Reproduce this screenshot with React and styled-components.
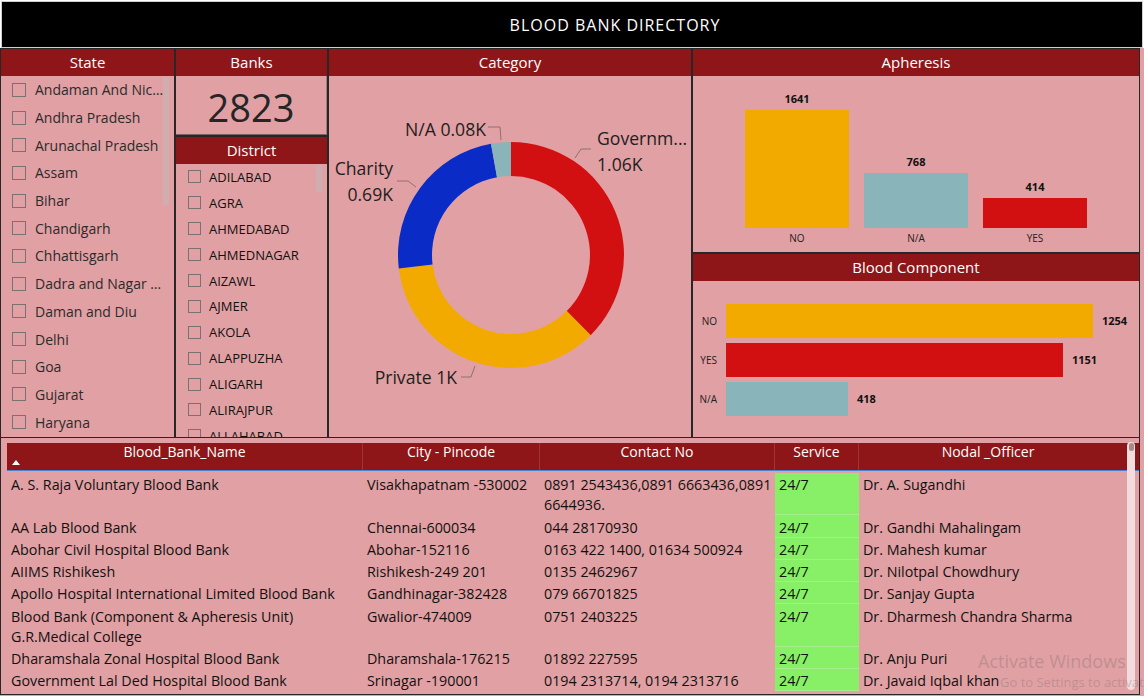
import React from 'react'
import styled, { createGlobalStyle } from 'styled-components'

const GlobalStyle = createGlobalStyle`
  html, body { margin: 0; padding: 0; background: #fff; }
  body { font-family: "Open Sans", "Noto Sans", sans-serif; }
  * { box-sizing: border-box; }
`

const states = [
  'Andaman And Nicobar Islands', 'Andhra Pradesh', 'Arunachal Pradesh', 'Assam', 'Bihar',
  'Chandigarh', 'Chhattisgarh', 'Dadra and Nagar Haveli', 'Daman and Diu', 'Delhi', 'Goa',
  'Gujarat', 'Haryana', 'Himachal Pradesh',
]

const districts = [
  'ADILABAD', 'AGRA', 'AHMEDABAD', 'AHMEDNAGAR', 'AIZAWL', 'AJMER', 'AKOLA',
  'ALAPPUZHA', 'ALIGARH', 'ALIRAJPUR', 'ALLAHABAD', 'ALWAR',
]

const category = [
  { name: 'Government', value: 1060, color: '#d31011' },
  { name: 'Private', value: 1003, color: '#f2aa00' },
  { name: 'Charity', value: 680, color: '#0a2bc6' },
  { name: 'N/A', value: 80, color: '#89b5ba' },
]

const apheresis = [
  { label: 'NO', value: 1641, color: '#f2aa00' },
  { label: 'N/A', value: 768, color: '#89b5ba' },
  { label: 'YES', value: 414, color: '#d31011' },
]

const components = [
  { label: 'NO', value: 1254, color: '#f2aa00' },
  { label: 'YES', value: 1151, color: '#d31011' },
  { label: 'N/A', value: 418, color: '#89b5ba' },
]

const columns = [
  { title: 'Blood_Bank_Name', width: 356 },
  { title: 'City - Pincode', width: 177 },
  { title: 'Contact No', width: 235 },
  { title: 'Service', width: 84 },
  { title: 'Nodal _Officer', width: 258 },
]

const rows = [
  ['A. S. Raja Voluntary Blood Bank', 'Visakhapatnam -530002', '0891 2543436,0891 6663436,0891\n6644936.', '24/7', 'Dr. A. Sugandhi'],
  ['AA Lab Blood Bank', 'Chennai-600034', '044 28170930', '24/7', 'Dr. Gandhi Mahalingam'],
  ['Abohar Civil Hospital Blood Bank', 'Abohar-152116', '0163 422 1400, 01634 500924', '24/7', 'Dr. Mahesh kumar'],
  ['AIIMS Rishikesh', 'Rishikesh-249 201', '0135 2462967', '24/7', 'Dr. Nilotpal Chowdhury'],
  ['Apollo Hospital International Limited Blood Bank', 'Gandhinagar-382428', '079 66701825', '24/7', 'Dr. Sanjay Gupta'],
  ['Blood Bank (Component & Apheresis Unit)\nG.R.Medical College', 'Gwalior-474009', '0751 2403225', '24/7', 'Dr. Dharmesh Chandra Sharma'],
  ['Dharamshala Zonal Hospital Blood Bank', 'Dharamshala-176215', '01892 227595', '24/7', 'Dr. Anju Puri'],
  ['Government Lal Ded Hospital Blood Bank', 'Srinagar -190001', '0194 2313714, 0194 2313716', '24/7', 'Dr. Javaid Iqbal khan'],
]

const gridCols = columns.map(c => c.width + 'px').join(' ')

// donut helpers, angles are degrees clockwise from 12 o'clock
const pt = (cx, cy, r, a) => {
  const rad = (a * Math.PI) / 180
  return [cx + r * Math.sin(rad), cy - r * Math.cos(rad)]
}
const arc = (cx, cy, r0, r1, a0, a1) => {
  const large = a1 - a0 > 180 ? 1 : 0
  const [x1, y1] = pt(cx, cy, r1, a0)
  const [x2, y2] = pt(cx, cy, r1, a1)
  const [x3, y3] = pt(cx, cy, r0, a1)
  const [x4, y4] = pt(cx, cy, r0, a0)
  return `M${x1} ${y1} A${r1} ${r1} 0 ${large} 1 ${x2} ${y2} L${x3} ${y3} A${r0} ${r0} 0 ${large} 0 ${x4} ${y4} Z`
}

function Donut () {
  const total = category.reduce((s, c) => s + c.value, 0)
  let start = 0
  const slices = category.map(c => {
    const sweep = (c.value / total) * 360
    const d = arc(182, 179, 79, 113, start, start + sweep)
    start += sweep
    return <path key={c.name} d={d} fill={c.color} />
  })
  return (
    <DonutSvg width='362' height='361' viewBox='0 0 362 361'>
      {slices}
      <g fill='none' stroke='#8a7273' strokeWidth='1'>
        <polyline points='246,82 252,73 262,73' />
        <polyline points='159,51 171,51 172,64' />
        <polyline points='68,105 79,105 87,111' />
        <polyline points='132,301 142,301 146,290' />
      </g>
      <LabelText x='268' y='69'>Governm...</LabelText>
      <LabelText x='268' y='95'>1.06K</LabelText>
      <LabelText x='157' y='60' textAnchor='end'>N/A 0.08K</LabelText>
      <LabelText x='64' y='99' textAnchor='end'>Charity</LabelText>
      <LabelText x='64' y='125' textAnchor='end'>0.69K</LabelText>
      <LabelText x='128' y='308' textAnchor='end'>Private 1K</LabelText>
    </DonutSvg>
  )
}

function ColumnChart () {
  const max = Math.max(...apheresis.map(a => a.value))
  return (
    <ColumnArea>
      {apheresis.map(a => (
        <ColumnItem key={a.label}>
          <ValueText>{a.value}</ValueText>
          <ColumnBar $color={a.color} style={{ height: Math.round((a.value / max) * 118) }} />
          <AxisText>{a.label}</AxisText>
        </ColumnItem>
      ))}
    </ColumnArea>
  )
}

function BarChart () {
  const max = Math.max(...components.map(c => c.value))
  return (
    <BarArea>
      {components.map(c => (
        <BarRow key={c.label}>
          <BarLabel>{c.label}</BarLabel>
          <HBar $color={c.color} style={{ width: Math.round((c.value / max) * 367) }} />
          <ValueText>{c.value}</ValueText>
        </BarRow>
      ))}
    </BarArea>
  )
}

export default function App () {
  return (
    <Page>
      <GlobalStyle />
      <TitleBar>BLOOD BANK DIRECTORY</TitleBar>
      <Board>
        <TopGrid>
          <Panel>
            <PanelHeader>State</PanelHeader>
            <SlicerList $pad={11} $gap={9}>
              {states.map(s => (
                <SlicerItem key={s} $h={27.7}>
                  <Check $size={14} />
                  <StateText>{s}</StateText>
                </SlicerItem>
              ))}
              <ScrollThumb $left={162} $height={128} />
            </SlicerList>
          </Panel>

          <Stack>
            <Panel $height={86}>
              <PanelHeader>Banks</PanelHeader>
              <CardValue>2823</CardValue>
            </Panel>
            <Panel $grow>
              <PanelHeader>District</PanelHeader>
              <SlicerList $pad={12} $gap={8}>
                {districts.map(d => (
                  <SlicerItem key={d} $h={25.9}>
                    <Check $size={13} />
                    <DistrictText>{d}</DistrictText>
                  </SlicerItem>
                ))}
                <ScrollThumb $left={140} $height={27} />
              </SlicerList>
            </Panel>
          </Stack>

          <Panel>
            <PanelHeader>Category</PanelHeader>
            <ChartBody>
              <Donut />
            </ChartBody>
          </Panel>

          <Stack>
            <Panel $height={203}>
              <PanelHeader>Apheresis</PanelHeader>
              <ColumnChart />
            </Panel>
            <Panel $grow>
              <PanelHeader>Blood Component</PanelHeader>
              <BarChart />
            </Panel>
          </Stack>
        </TopGrid>

        <TablePanel>
          <HeaderRow>
            {columns.map((c, i) => (
              <HeaderCell key={c.title}>
                {c.title}
                {i === 0 && <SortArrow />}
              </HeaderCell>
            ))}
          </HeaderRow>
          {rows.map(r => (
            <DataRow key={r[0]}>
              {r.map((v, i) => (
                <Cell key={i} $service={i === 3}>{v}</Cell>
              ))}
            </DataRow>
          ))}
          <TableScroll>
            <TableThumb />
          </TableScroll>
        </TablePanel>
      </Board>

      <Watermark>
        <WmTitle>Activate Windows</WmTitle>
        <WmSub>Go to Settings to activate Windows.</WmSub>
      </Watermark>
    </Page>
  )
}

const Page = styled.div`
  position: relative;
  width: 1144px;
  height: 697px;
  overflow: hidden;
  background: #fff;
`

const TitleBar = styled.div`
  margin: 1px 1px 0 1px;
  height: 47px;
  border: 1px solid #cfcfcf;
  padding-left: 86px;
  background: #000;
  color: #fff;
  display: flex;
  align-items: center;
  justify-content: center;
  font-size: 16px;
  letter-spacing: 1px;
`

const Board = styled.div`
  background: #e1a0a3;
  height: 648px;
`

const TopGrid = styled.div`
  width: 1140px;
  height: 390px;
  display: grid;
  grid-template-columns: 173px 151px 362px 446px;
  column-gap: 2px;
  padding: 1px 1px 1px 1px;
  background: #272727;
`

const Stack = styled.div`
  display: flex;
  flex-direction: column;
  gap: 2px;
  min-height: 0;
`

const Panel = styled.div`
  position: relative;
  display: flex;
  flex-direction: column;
  background: #e1a0a3;
  overflow: hidden;
  min-height: 0;
  ${p => p.$height && `height: ${p.$height}px; flex: none;`}
  ${p => p.$grow && 'flex: 1;'}
`

const PanelHeader = styled.div`
  flex: none;
  height: 27px;
  padding-bottom: 1px;
  background: #8f1618;
  color: #fff;
  font-size: 15px;
  display: flex;
  align-items: center;
  justify-content: center;
`

const SlicerList = styled.div`
  position: relative;
  flex: 1;
  overflow: hidden;
  padding-left: ${p => p.$pad}px;
  --gap: ${p => p.$gap}px;
`

const SlicerItem = styled.div`
  height: ${p => p.$h}px;
  display: flex;
  align-items: center;
  gap: var(--gap);
`

const Check = styled.span`
  flex: none;
  width: ${p => p.$size}px;
  height: ${p => p.$size}px;
  border: 1px solid #7b7172;
`

const StateText = styled.span`
  font-size: 14px;
  color: #2b2b2b;
  white-space: nowrap;
  overflow: hidden;
  text-overflow: ellipsis;
  max-width: 129px;
`

const DistrictText = styled.span`
  font-size: 13px;
  color: #111;
  white-space: nowrap;
`

const ScrollThumb = styled.div`
  position: absolute;
  top: 1px;
  left: ${p => p.$left}px;
  width: 6px;
  height: ${p => p.$height}px;
  background: #cfaeb0;
`

const CardValue = styled.div`
  flex: 1;
  display: flex;
  align-items: center;
  justify-content: center;
  padding-top: 3px;
  font-size: 38px;
  color: #252525;
  border-right: 1px solid #9a7f80;
  border-bottom: 1px solid #7a6364;
`

const ChartBody = styled.div`
  flex: 1;
  position: relative;
`

const DonutSvg = styled.svg`
  display: block;
`

const LabelText = styled.text`
  font-family: "Open Sans", sans-serif;
  font-size: 17.6px;
  fill: #1e1e1e;
`

const ColumnArea = styled.div`
  flex: 1;
  display: flex;
  align-items: flex-end;
  gap: 15px;
  padding: 0 0 7px 52px;
`

const ColumnItem = styled.div`
  width: 104px;
  display: flex;
  flex-direction: column;
  align-items: center;
`

const ValueText = styled.div`
  font-size: 11px;
  font-weight: 700;
  color: #111;
  line-height: 16px;
  margin-bottom: 3px;
`

const ColumnBar = styled.div`
  width: 104px;
  background: ${p => p.$color};
`

const AxisText = styled.div`
  font-size: 10px;
  color: #222;
  line-height: 14px;
  margin-top: 3px;
`

const BarArea = styled.div`
  flex: 1;
  display: flex;
  flex-direction: column;
  gap: 5px;
  padding-top: 23px;
`

const BarRow = styled.div`
  height: 34px;
  display: flex;
  align-items: center;
  gap: 9px;

  & > ${ValueText} {
    margin: 0;
  }
`

const BarLabel = styled.div`
  width: 24px;
  text-align: right;
  font-size: 10px;
  color: #222;
`

const HBar = styled.div`
  height: 34px;
  background: ${p => p.$color};
`

const TablePanel = styled.div`
  position: relative;
  width: 1140px;
  height: 257px;
  border: 1px solid #272727;
  border-top: none;
  padding: 5px 0 0 6px;
  background: #e1a0a3;
  overflow: hidden;
`

const HeaderRow = styled.div`
  display: grid;
  grid-template-columns: ${gridCols};
  height: 28px;
  margin-bottom: 2px;
  background: #8f1618;
  border-bottom: 1px solid #4b7fd1;
`

const HeaderCell = styled.div`
  position: relative;
  color: #fff;
  font-size: 14px;
  line-height: 18px;
  padding-top: 0;
  text-align: center;
  border-right: 1px solid #9e3436;

  &:last-child {
    border-right: none;
  }
`

const SortArrow = styled.span`
  position: absolute;
  left: 5px;
  top: 17px;
  width: 0;
  height: 0;
  border-left: 4px solid transparent;
  border-right: 4px solid transparent;
  border-bottom: 5px solid #fff;
`

const DataRow = styled.div`
  display: grid;
  grid-template-columns: ${gridCols};
`

const Cell = styled.div`
  font-size: 14.3px;
  line-height: 20px;
  padding: 2.3px 4px 0;
  color: #111;
  white-space: pre;
  ${p => p.$service && `
    background: #88f066;
    box-shadow: inset 0 -1px 0 #a4ee8c;
  `}
`

const TableScroll = styled.div`
  position: absolute;
  left: 1126px;
  top: 4px;
  width: 8px;
  height: 248px;
  background: #f3dcdd;
  border-radius: 4px;
`

const TableThumb = styled.div`
  margin: 1px auto 0;
  width: 5px;
  height: 8px;
  border-radius: 3px;
  background: #a48c8d;
`

const Watermark = styled.div`
  position: absolute;
  left: 978px;
  top: 649px;
  white-space: nowrap;
  color: rgba(120, 110, 112, 0.35);
  pointer-events: none;
`

const WmTitle = styled.div`
  font-size: 18px;
  line-height: 24px;
`

const WmSub = styled.div`
  font-size: 13px;
  line-height: 18px;
  margin-left: 22px;
`
